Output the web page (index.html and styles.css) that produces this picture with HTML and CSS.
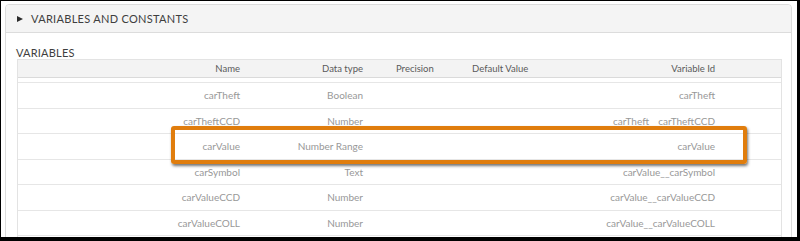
FILE: index.html
```html
<!DOCTYPE html>
<html>
<head>
<meta charset="utf-8">
<link rel="stylesheet" href="styles.css">
</head>
<body>
<div class="frame">
  <div class="card">
    <div class="card-head">
      <span class="caret"></span>
      <span class="card-title">VARIABLES AND CONSTANTS</span>
    </div>
    <div class="card-body">
      <div class="section-label">VARIABLES</div>
      <div class="table">
        <div class="row head">
          <div class="c c1">Name</div>
          <div class="c c2">Data type</div>
          <div class="c c3">Precision</div>
          <div class="c c4">Default Value</div>
          <div class="c c5">Variable Id</div>
          <div class="c c6"></div>
        </div>
        <div class="rows">
          <div class="row">
            <div class="c c1">carTheft</div>
            <div class="c c2">Boolean</div>
            <div class="c c3"></div>
            <div class="c c4"></div>
            <div class="c c5">carTheft</div>
            <div class="c c6"></div>
          </div>
          <div class="row">
            <div class="c c1">carTheftCCD</div>
            <div class="c c2">Number</div>
            <div class="c c3"></div>
            <div class="c c4"></div>
            <div class="c c5">carTheft__carTheftCCD</div>
            <div class="c c6"></div>
          </div>
          <div class="row">
            <div class="c c1">carValue</div>
            <div class="c c2">Number Range</div>
            <div class="c c3"></div>
            <div class="c c4"></div>
            <div class="c c5">carValue</div>
            <div class="c c6"></div>
          </div>
          <div class="row">
            <div class="c c1">carSymbol</div>
            <div class="c c2">Text</div>
            <div class="c c3"></div>
            <div class="c c4"></div>
            <div class="c c5">carValue__carSymbol</div>
            <div class="c c6"></div>
          </div>
          <div class="row">
            <div class="c c1">carValueCCD</div>
            <div class="c c2">Number</div>
            <div class="c c3"></div>
            <div class="c c4"></div>
            <div class="c c5">carValue__carValueCCD</div>
            <div class="c c6"></div>
          </div>
          <div class="row">
            <div class="c c1">carValueCOLL</div>
            <div class="c c2">Number</div>
            <div class="c c3"></div>
            <div class="c c4"></div>
            <div class="c c5">carValue__carValueCOLL</div>
            <div class="c c6"></div>
          </div>
          <div class="row">
            <div class="c c1"></div>
            <div class="c c2"></div>
            <div class="c c3"></div>
            <div class="c c4"></div>
            <div class="c c5"></div>
            <div class="c c6"></div>
          </div>
          <div class="highlight"></div>
        </div>
      </div>
    </div>
  </div>
</div>
</body>
</html>
```
FILE: styles.css
```css
html, body {
  margin: 0;
  padding: 0;
  background: #fff;
}
.frame {
  width: 800px;
  height: 241px;
  box-sizing: border-box;
  border-style: solid;
  border-color: #000;
  border-width: 1px 3px 4px 1px;
  overflow: hidden;
  background: #fff;
  font-family: Lato, "Open Sans", sans-serif;
}
.card {
  margin: 3px 5px 0 4px;
  border: 1px solid #dcdcdc;
  border-radius: 4px 4px 0 0;
  height: 400px;
}
.card-head {
  height: 27px;
  background: #f4f4f4;
  border-bottom: 1px solid #dcdcdc;
  border-radius: 4px 4px 0 0;
  display: flex;
  align-items: center;
  padding-left: 11px;
}
.caret {
  width: 0;
  height: 0;
  border-left: 6px solid #2b2b2b;
  border-top: 3.5px solid transparent;
  border-bottom: 3.5px solid transparent;
  margin-right: 8px;
  margin-top: 1px;
}
.card-title {
  font-size: 11px;
  letter-spacing: 0.3px;
  color: #3e3e3e;
}
.card-body {
  padding: 14px 9px 0 11px;
}
.section-label {
  font-size: 11px;
  letter-spacing: 0.2px;
  color: #3e3e3e;
  line-height: 12px;
  margin-left: -1px;
}
.table {
  border-left: 1px solid #e3e3e3;
  border-right: 1px solid #e3e3e3;
}
.row {
  display: grid;
  grid-template-columns: 232px 123px 99px 110px 143px 1fr;
  height: 25.5px;
  box-sizing: border-box;
  border-top: 1px solid #e6e6e6;
  align-items: center;
  font-size: 10px;
  color: #989898;
}
.row.head {
  height: 19px;
  background: #f3f3f3;
  border-top: 1px solid #e3e3e3;
  border-bottom: 1px solid #dadada;
  color: #5a5a5a;
  font-size: 9.5px;
}
.rows {
  position: relative;
  padding-top: 4px;
}
.c {
  white-space: nowrap;
}
.c1, .c2, .c5 {
  text-align: right;
  padding-right: 10px;
}
.c3 {
  padding-left: 23px;
}
.highlight {
  position: absolute;
  left: 153px;
  top: 48px;
  width: 576px;
  height: 38px;
  box-sizing: border-box;
  border: 4px solid #e07d0d;
  border-radius: 3px;
  box-shadow: 1px 2px 3px rgba(0, 0, 0, 0.55);
}
```
